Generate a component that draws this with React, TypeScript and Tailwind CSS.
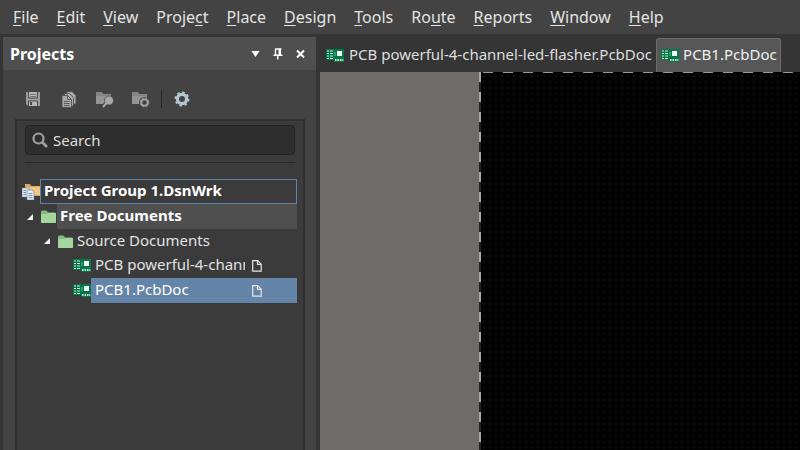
import type { ReactNode } from "react";

const menuItems = [
  ["", "F", "ile"],
  ["", "E", "dit"],
  ["", "V", "iew"],
  ["Proje", "c", "t"],
  ["", "P", "lace"],
  ["", "D", "esign"],
  ["", "T", "ools"],
  ["Ro", "u", "te"],
  ["", "R", "eports"],
  ["", "W", "indow"],
  ["", "H", "elp"],
];

function PcbIcon() {
  return (
    <svg width="18" height="13" viewBox="0 0 18 13" className="shrink-0" aria-hidden="true">
      <path d="M0 0h18v13H8v-2H0z" fill="#08764a" />
      <path d="M1 2h2M1 4.500h2M1 7h2M1 9.500h2M4 2h3M4 4.500h3M4 7h3M4 9.500h3" stroke="#c4ead4" />
      <path d="M8 3h2v4H8z" fill="#27a06c" />
      <path d="M11 2h5v5h-5z" fill="#eefff5" />
      <path d="M9 11h1.500M11.500 11H13M14 11h1.500M16.300 11h1" stroke="#c4ead4" strokeWidth="1.800" />
    </svg>
  );
}

function FolderIcon() {
  return (
    <svg width="15" height="13" viewBox="0 0 15 13" className="shrink-0" aria-hidden="true">
      <path d="M0 1.500 1 .5h4.500l1.500 2h7l1 1V13H0z" fill="#83bd7e" />
      <path d="M0 4h6l1.500-1H15v9l-1 1H1l-1-1z" fill="#a5d69d" />
    </svg>
  );
}

function GroupIcon() {
  return (
    <svg width="18" height="17" viewBox="0 0 18 17" className="shrink-0" aria-hidden="true">
      <path d="M3 1h5l1.500 2H18v10H3z" fill="#d9a55f" />
      <path d="M4 4h14v8H4z" fill="#f0c688" />
      <path d="M0 5h7v9H0z" fill="#dfe8f5" stroke="#6f87a8" strokeWidth=".6" />
      <path d="M5 7h5l2 2v8H5z" fill="#e8effa" stroke="#6f87a8" strokeWidth=".7" />
      <path d="M1.500 7.500H4M1.500 9.500H4M1.500 11.500H4M6.500 10.500h4M6.500 12.500h4M6.500 14.500h4" stroke="#6481ab" strokeWidth=".9" />
    </svg>
  );
}

function PageIcon() {
  return (
    <svg width="10" height="12" viewBox="0 0 10 12" className="shrink-0" aria-hidden="true">
      <path d="M.7.7h5l3.500 3.500v7H.7zM5.500.7v3.700h3.700" fill="none" stroke="#e6e6e6" strokeWidth="1.200" />
    </svg>
  );
}

function Expander() {
  return (
    <svg width="6" height="6" viewBox="0 0 6 6" className="shrink-0" aria-hidden="true">
      <path d="M6 0v6H0z" fill="#f2f2f2" />
    </svg>
  );
}

function SaveIcon() {
  return (
    <svg width="16" height="16" viewBox="0 0 16 16" aria-hidden="true">
      <path d="M1 1h14v14H3l-2-2z" fill="#9b9b9b" />
      <path d="M3.500 1v6h9V1M3.500 15v-5h9v5" fill="#b5b5b5" stroke="#4a4a4a" />
      <path d="M5 3.500h6M5 5.500h6" stroke="#777" />
      <path d="M5 11h2v3H5z" fill="#4a4a4a" />
    </svg>
  );
}

function CopyIcon() {
  return (
    <svg width="16" height="17" viewBox="0 0 16 17" fill="#a9a9a9" stroke="#4a4a4a" strokeWidth=".8" aria-hidden="true">
      <path d="M6 .5h5l4 4V13H6z" />
      <path d="M3.500 2.500h5l4 4V15h-9z" />
      <path d="M1 4.500h5.500l4 4v8H1z" />
      <path d="M6.500 4.500v4h4M3 10.500h5.500M3 12.500h5.500M3 14.500h5.500" fill="none" />
    </svg>
  );
}

function FolderSearchIcon() {
  return (
    <svg width="18" height="17" viewBox="0 0 18 17" aria-hidden="true">
      <path d="M0 1h6l1.500 2H15v10H0z" fill="#858585" />
      <path d="M0 5h15v8H0z" fill="#949494" />
      <path d="m10.500 12-4 4.500" stroke="#434343" strokeWidth="4" />
      <circle cx="13" cy="9.500" r="4.500" fill="#a9a9a9" stroke="#434343" strokeWidth=".7" />
      <path d="m10.500 12-3.500 4" stroke="#a9a9a9" strokeWidth="2" />
    </svg>
  );
}

function FolderGearIcon() {
  return (
    <svg width="18" height="17" viewBox="0 0 18 17" aria-hidden="true">
      <path d="M0 1h6l1.500 2H15v10H0z" fill="#858585" />
      <path d="M0 5h15v8H0z" fill="#949494" />
      <circle cx="12.500" cy="11.500" r="5.500" fill="#434343" />
      <circle cx="12.500" cy="11.500" r="4.400" fill="none" stroke="#a5a5a5" strokeWidth="1" strokeDasharray="2 1.450" />
      <circle cx="12.500" cy="11.500" r="3.200" fill="none" stroke="#a5a5a5" strokeWidth="1.800" />
    </svg>
  );
}

function GearIcon() {
  return (
    <svg width="16" height="16" viewBox="0 0 16 16" fill="none" stroke="#b4c8d4" aria-hidden="true">
      <circle cx="8" cy="8" r="6.700" strokeWidth="1.600" strokeDasharray="2.600 2.660" />
      <circle cx="8" cy="8" r="4.600" strokeWidth="3.200" />
    </svg>
  );
}

function ToolButton({ label, children }: { label: string; children: ReactNode }) {
  return (
    <button type="button" aria-label={label} className="flex h-5 w-[18px] items-center justify-center">
      {children}
    </button>
  );
}

function MenuBar() {
  return (
    <nav className="flex h-[34px] shrink-0 items-center gap-[18px] bg-[#434343] px-[13px] text-base text-[#e4e4e4]">
      {menuItems.map(([before, key, after]) => (
        <button key={before + key + after} type="button" className="whitespace-nowrap">
          {before}
          <span className="underline decoration-1 underline-offset-2">{key}</span>
          {after}
        </button>
      ))}
    </nav>
  );
}

function PanelHeader() {
  return (
    <header className="flex h-[33px] shrink-0 items-center bg-[#4f4f4f] pr-[11px] pl-[7px]">
      <h2 className="flex-1 text-base font-bold text-white">Projects</h2>
      <div className="flex items-center gap-[13px]">
        <button type="button" aria-label="Panel menu">
          <svg width="9" height="10" viewBox="0 0 9 10">
            <path d="M.5 2h8l-4 6z" fill="#fff" />
          </svg>
        </button>
        <button type="button" aria-label="Pin panel">
          <svg width="10" height="12" viewBox="0 0 10 12">
            <path d="M2 1h6.500M2.500 1v6M.5 7.200h9M4.700 7v4.500" fill="none" stroke="#fff" strokeWidth="1.400" />
            <path d="M5.500 1H8v6H5.500z" fill="#fff" />
          </svg>
        </button>
        <button type="button" aria-label="Close panel">
          <svg width="9" height="10" viewBox="0 0 9 10">
            <path d="m1 1.500 7 7m0-7-7 7" stroke="#fff" strokeWidth="2" />
          </svg>
        </button>
      </div>
    </header>
  );
}

function ProjectTree() {
  return (
    <ul className="mt-4 mr-[6px] ml-[5px] text-[15px] leading-5 text-[#e2e2e2]">
      <li>
        <div className="flex h-[25px] items-center">
          <GroupIcon />
          <span className="flex h-[25px] flex-1 items-center border border-[#5f82a6] pb-[3px] pl-[3px] font-bold text-white">
            Project Group 1.DsnWrk
          </span>
        </div>
        <ul>
          <li>
            <div className="flex h-[25px] items-center pl-[5px]">
              <Expander />
              <span className="ml-2 flex">
                <FolderIcon />
              </span>
              <span className="ml-px flex h-[25px] flex-1 items-center bg-[#4f4f4f] pb-[3px] pl-[3px] font-bold text-white">
                Free Documents
              </span>
            </div>
            <ul>
              <li>
                <div className="flex h-[24px] items-center pl-[22px]">
                  <Expander />
                  <span className="ml-2 flex">
                    <FolderIcon />
                  </span>
                  <span className="pb-[3px] pl-1">Source Documents</span>
                </div>
                <ul>
                  <li className="flex h-[25px] items-center pl-[51px]">
                    <PcbIcon />
                    <a href="#flasher" className="flex h-[25px] min-w-0 flex-1 items-center pl-[4px]">
                      <span className="w-[150px] overflow-hidden pb-[3px] whitespace-nowrap">PCB powerful-4-channel-led-flasher.PcbDoc</span>
                      <span className="ml-[7px]">
                        <PageIcon />
                      </span>
                    </a>
                  </li>
                  <li className="flex h-[25px] items-center pl-[51px]">
                    <PcbIcon />
                    <a href="#pcb1" className="flex h-[25px] min-w-0 flex-1 items-center bg-[#6485a8] pl-[4px] text-white">
                      <span className="w-[150px] overflow-hidden pb-[3px] whitespace-nowrap">PCB1.PcbDoc</span>
                      <span className="ml-[7px]">
                        <PageIcon />
                      </span>
                    </a>
                  </li>
                </ul>
              </li>
            </ul>
          </li>
        </ul>
      </li>
    </ul>
  );
}

function ProjectsPanel() {
  return (
    <aside className="flex w-[313px] shrink-0 flex-col bg-[#434343]">
      <PanelHeader />
      <div className="flex h-[49px] shrink-0 items-center gap-[18px] pt-[9px] pl-[21px]">
        <ToolButton label="Save">
          <SaveIcon />
        </ToolButton>
        <ToolButton label="Copy documents">
          <CopyIcon />
        </ToolButton>
        <ToolButton label="Find in project">
          <FolderSearchIcon />
        </ToolButton>
        <ToolButton label="Project options">
          <FolderGearIcon />
        </ToolButton>
        <div className="-mx-[7px] h-[18px] w-px bg-[#282828]" />
        <ToolButton label="Settings">
          <GearIcon />
        </ToolButton>
      </div>
      <div className="mr-[11px] ml-3 flex-1 border-2 border-b-0 border-[#303030] bg-[#3b3b3b]">
        <label className="mx-2 mt-1 flex h-[30px] items-center gap-[5px] rounded border border-[#232323] bg-[#2e2e2e] px-[6px]">
          <svg width="16" height="16" viewBox="0 0 16 16" fill="none" stroke="#a0a0a0" aria-hidden="true">
            <circle cx="6.500" cy="6.500" r="5" strokeWidth="2.200" />
            <path d="m10 10 5 5" strokeWidth="2.600" />
          </svg>
          <input
            type="text"
            aria-label="Search"
            placeholder="Search"
            className="min-w-0 flex-1 bg-transparent text-[15px] text-[#e2e2e2] outline-none placeholder:text-[#dedede]"
          />
        </label>
        <div className="mx-2 mt-[7px] h-px bg-[#292929]" />
        <ProjectTree />
      </div>
    </aside>
  );
}

function DocumentTabs() {
  return (
    <div role="tablist" className="flex h-[35px] shrink-0 items-end text-[15px] text-[#dedede]">
      <button type="button" role="tab" aria-selected="false" className="flex h-[34px] items-center gap-[5px] pr-1 pl-[6px] whitespace-nowrap">
        <PcbIcon />
        <span className="pb-[2px]">PCB powerful-4-channel-led-flasher.PcbDoc</span>
      </button>
      <button
        type="button"
        role="tab"
        aria-selected="true"
        className="flex h-[34px] items-center gap-1 rounded-t-[3px] border border-b-0 border-[#6b6b6b] bg-[#575757] pr-[3px] pl-1 whitespace-nowrap text-[#f0f0f0]"
      >
        <PcbIcon />
        <span className="pb-[2px]">PCB1.PcbDoc</span>
      </button>
    </div>
  );
}

function Board() {
  return (
    <main className="flex flex-1 bg-[#6f6b69]">
      <div className="w-[159px] shrink-0" />
      <div className="w-[2px] shrink-0 bg-[repeating-linear-gradient(180deg,#aaa_0_10px,#222_10px_20px)]" />
      <div className="flex flex-1 flex-col bg-black">
        <div className="h-px bg-[repeating-linear-gradient(90deg,#000_0_2px,#999_2px_12px,#000_12px_20px)]" />
        <div className="flex-1 bg-[radial-gradient(circle,#101010_1px,transparent_1px)] bg-[size:6px_6px]" />
      </div>
    </main>
  );
}

export default function App() {
  return (
    <div className="flex h-screen flex-col overflow-hidden bg-[#353535] font-['Noto_Sans',sans-serif]">
      <MenuBar />
      <div className="flex min-h-0 flex-1 gap-1 pl-[3px]">
        <div className="flex pt-[3px]">
          <ProjectsPanel />
        </div>
        <div className="flex min-w-0 flex-1 flex-col pt-[3px]">
          <DocumentTabs />
          <Board />
        </div>
      </div>
    </div>
  );
}
